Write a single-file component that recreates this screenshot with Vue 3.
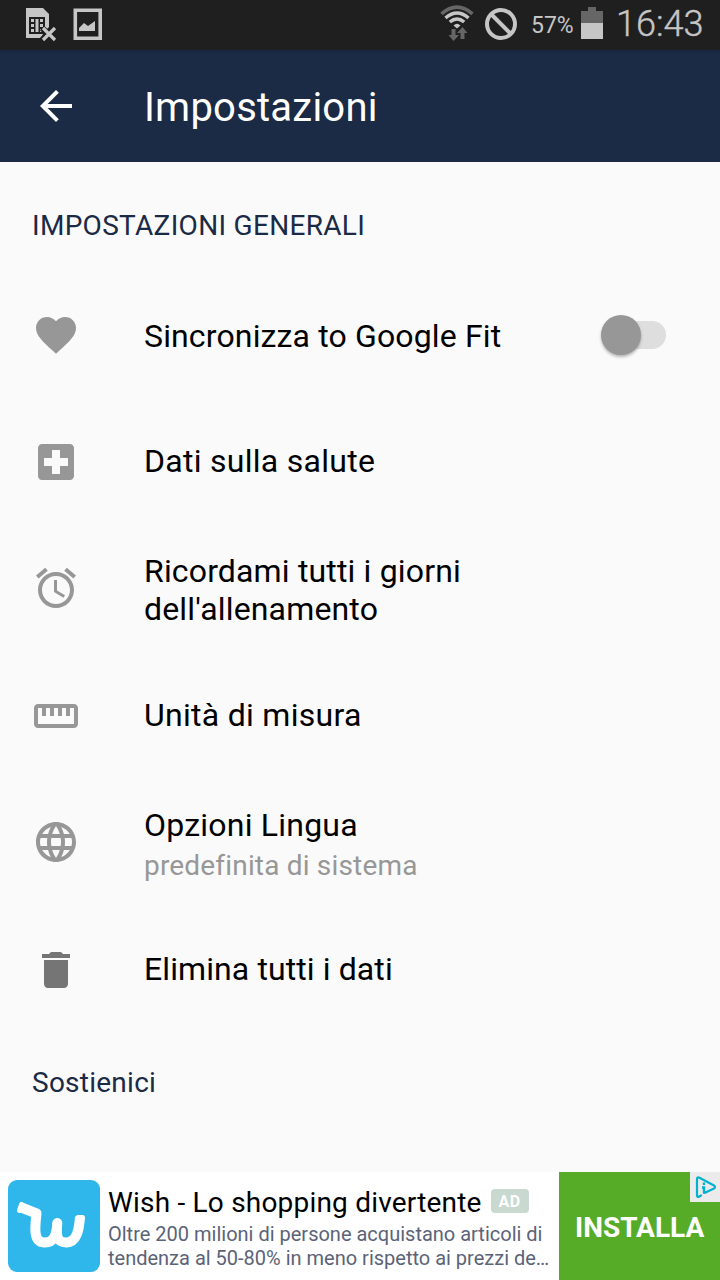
<script setup>
const rows = [
  { id: 'fit', title: ['Sincronizza to Google Fit'], toggle: true, path: 'M12 21.35l-1.45-1.32C5.4 15.36 2 12.28 2 8.5 2 5.42 4.42 3 7.5 3c1.74 0 3.41.81 4.5 2.09C13.09 3.81 14.76 3 16.5 3 19.58 3 22 5.42 22 8.5c0 3.78-3.4 6.86-8.55 11.54L12 21.35z' },
  { id: 'health', title: ['Dati sulla salute'], path: 'M19 3H5c-1.1 0-1.99.9-1.99 2L3 19c0 1.1.9 2 2 2h14c1.1 0 2-.9 2-2V5c0-1.1-.9-2-2-2zm-1 11h-4v4h-4v-4H6v-4h4V6h4v4h4v4z' },
  { id: 'alarm', title: ['Ricordami tutti i giorni', "dell'allenamento"], path: 'M22 5.72l-4.6-3.86-1.29 1.53 4.6 3.86L22 5.72zM7.88 3.39L6.6 1.86 2 5.71l1.29 1.53 4.59-3.85zM12.5 8H11v6l4.75 2.85.75-1.23-4-2.37V8zM12 4c-4.97 0-9 4.03-9 9s4.02 9 9 9c4.97 0 9-4.03 9-9s-4.03-9-9-9zm0 16c-3.87 0-7-3.13-7-7s3.13-7 7-7 7 3.13 7 7-3.13 7-7 7z' },
  { id: 'units', title: ['Unità di misura'], path: 'M21 6H3c-1.1 0-2 .9-2 2v8c0 1.1.9 2 2 2h18c1.1 0 2-.9 2-2V8c0-1.1-.9-2-2-2zm0 10H3V8h2v4h2V8h2v4h2V8h2v4h2V8h2v4h2V8h2v8z' },
  { id: 'language', title: ['Opzioni Lingua'], sub: 'predefinita di sistema', path: 'M11.99 2C6.47 2 2 6.48 2 12s4.47 10 9.99 10C17.52 22 22 17.52 22 12S17.52 2 11.99 2zm6.93 6h-2.95c-.32-1.25-.78-2.45-1.38-3.56 1.84.63 3.37 1.91 4.33 3.56zM12 4.04c.83 1.2 1.48 2.53 1.91 3.96h-3.82c.43-1.43 1.08-2.76 1.91-3.96zM4.26 14C4.1 13.36 4 12.69 4 12s.1-1.36.26-2h3.38c-.08.66-.14 1.32-.14 2 0 .68.06 1.34.14 2H4.26zm.82 2h2.95c.32 1.25.78 2.45 1.38 3.56-1.84-.63-3.37-1.9-4.33-3.56zm2.95-8H5.08c.96-1.66 2.49-2.93 4.33-3.56C8.81 5.55 8.35 6.75 8.03 8zM12 19.96c-.83-1.2-1.48-2.53-1.91-3.96h3.82c-.43 1.43-1.08 2.76-1.91 3.96zM14.34 14H9.66c-.09-.66-.16-1.32-.16-2 0-.68.07-1.35.16-2h4.68c.09.65.16 1.32.16 2 0 .68-.07 1.34-.16 2zm.25 5.56c.6-1.11 1.06-2.31 1.38-3.56h2.95c-.96 1.65-2.49 2.93-4.33 3.56zM16.36 14c.08-.66.14-1.32.14-2 0-.68-.06-1.34-.14-2h3.38c.16.64.26 1.31.26 2s-.1 1.36-.26 2h-3.38z' },
  { id: 'delete', title: ['Elimina tutti i dati'], path: 'M6 19c0 1.1.9 2 2 2h8c1.1 0 2-.9 2-2V7H6v12zM19 4h-3.500l-1-1h-5l-1 1H5v2h14V4z' },
]
</script>

<template>
  <div class="screen">
    <header class="status">
      <svg class="sim" width="32" height="34" viewBox="0 0 32 34">
        <path fill="#c6c6c6" d="M1 0h17l6 6v13l-5 5-3 6H1z" />
        <path fill="#1f1f1f" d="M4 9h16v17H4z" />
        <path fill="#c6c6c6" d="M6 11h3v3H6zM6 16h3v3H6zM6 21h3v3H6zM10.500 11h3v13h-3zM15 11h3v3h-3zM15 16h3v3h-3zM15 21h3v3h-3z" />
        <path stroke="#1f1f1f" stroke-width="6" d="M17 20l13 12M30 20L17 32" />
        <path stroke="#c6c6c6" stroke-width="3.200" d="M18 20l12 12M30 20l-12 12" />
      </svg>
      <svg class="picture" width="30" height="33" viewBox="0 0 30 33">
        <path fill="none" stroke="#c6c6c6" stroke-width="3.600" d="M2.300 2.300h24.900v27.900H2.300z" />
        <path fill="#c6c6c6" d="M6 23v-3l5-5 4 3 7-5v10z" />
      </svg>
      <span class="spacer"></span>
      <svg class="wifi" width="34" height="37" viewBox="0 0 34 37" fill="none">
        <path stroke="#666" stroke-width="3.600" d="M1.500 8.800Q17 -4.500 32.500 8.800" />
        <g stroke="#c6c6c6" stroke-width="3.500">
          <path d="M5.500 13Q17 3 28.500 13M9.800 17Q17 11 24.200 17" />
        </g>
        <path fill="#c6c6c6" d="M13.500 20.500Q17 17 20.500 20.500L17 23.500z" />
        <path fill="#666" d="M11.500 24h4v6h3.500l-5.500 6-5-6h3zM20.500 34v-6H17l5.500-6 5 6H24.500v6z" />
      </svg>
      <svg class="block" width="34" height="34" viewBox="0 0 34 34" fill="none" stroke="#c6c6c6" stroke-width="4">
        <circle cx="17" cy="17" r="14" /><path d="M7 7l20 20" />
      </svg>
      <span class="percent">57%</span>
      <svg class="battery" width="22" height="32" viewBox="0 0 22 32">
        <path fill="#666" d="M7 0h8v4h7v12H0V4h7z" /><path fill="#c6c6c6" d="M0 16h22v16H0z" />
      </svg>
      <span class="clock">16:43</span>
    </header>

    <nav class="toolbar">
      <svg width="48" height="48" viewBox="0 0 24 24"><path fill="#fff" d="M20 11H7.830l5.590-5.590L12 4l-8 8 8 8 1.410-1.410L7.830 13H20v-2z" /></svg>
      <h1>Impostazioni</h1>
    </nav>

    <main>
      <h2 class="section">IMPOSTAZIONI GENERALI</h2>
      <div v-for="row in rows" :key="row.id" class="row" :class="row.id">
        <svg class="icon" width="48" height="48" viewBox="0 0 24 24"><path :d="row.path" /></svg>
        <div class="label">
          <div v-for="(line, i) in row.title" :key="i">{{ line }}</div>
          <div v-if="row.sub" class="sub">{{ row.sub }}</div>
        </div>
        <div v-if="row.toggle" class="switch"><div class="thumb"></div></div>
      </div>
      <h2 class="support">Sostienici</h2>
    </main>

    <footer class="ad">
      <svg class="logo" width="92" height="92" viewBox="0 0 92 92">
        <rect width="92" height="92" rx="9" fill="#2fb7ec" />
        <path fill="none" stroke="#fff" stroke-width="10" stroke-linejoin="round" d="M11 26.500L28.500 33.500C27 47 25 62 36 62.500C46 63 48.500 55 49.300 43C48 56 49 62.500 58 62.500C69 62 71 50 72 37" />
        <path fill="none" stroke="#fff" stroke-width="5" stroke-linecap="round" stroke-linejoin="round" d="M13.500 24.500L11.500 30.500M47 43h4.500M70 37.500h4.500" />
      </svg>
      <div class="copy">
        <div class="adtitle"><span>Wish - Lo shopping divertente</span><span class="badge">AD</span></div>
        <div class="desc">Oltre 200 milioni di persone acquistano articoli di</div>
        <div class="desc">tendenza al 50-80% in meno rispetto ai prezzi de…</div>
      </div>
      <div class="install">
        <span>INSTALLA</span>
        <svg class="choices" width="30" height="30" viewBox="0 0 30 30">
          <path fill="#ebebeb" d="M0 0h30v30H0z" />
          <path fill="none" stroke="#00b2d0" stroke-width="2.200" stroke-linecap="round" stroke-linejoin="round" d="M11 23.500L8.500 25Q7 25 7 23V7Q7 4.500 9.500 5.800L24 13.500Q26 15 24 16.500L15.500 20.500" />
          <path stroke="#00b2d0" stroke-width="2.400" d="M14 10.500v2.400M12 15.500h2v5h2" fill="none" />
        </svg>
      </div>
    </footer>
  </div>
</template>

<style>
body { background: #fafafa; overflow: hidden; }
</style>

<style scoped>
* { box-sizing: border-box; }
.screen { width: 720px; height: 1280px; display: flex; flex-direction: column; background: #fafafa; font-family: Roboto, "Liberation Sans", sans-serif; color: #000; white-space: nowrap; overflow: hidden; }
svg { display: block; flex: none; }
h1, h2 { margin: 0; font-weight: 400; }
.status { flex: none; height: 50px; display: flex; align-items: flex-start; background: #1f1f1f; color: #c6c6c6; }
.sim { margin: 8px 0 0 25px; }
.picture { margin: 8px 0 0 16px; }
.spacer { flex: 1; }
.wifi { margin: 5px 10px 0 0; }
.block { margin: 7px 13px 0 0; }
.percent { width: 50px; font-size: 23px; line-height: 51px; }
.battery { margin-top: 7px; }
.clock { width: 88px; margin: 0 16px 0 13px; font-size: 36px; line-height: 48px; font-weight: 300; -webkit-text-stroke: 0.4px #c6c6c6; }
.toolbar { flex: none; height: 112px; background: linear-gradient(#182641, #1b2a45 5px); display: flex; align-items: center; padding-left: 32px; color: #fff; }
.toolbar h1 { margin: 3px 0 0 64px; font-size: 40px; line-height: 48px; letter-spacing: 0.23px; }
main { flex: 1; }
.section { height: 109px; padding: 46px 0 0 32px; font-size: 28px; line-height: 36px; letter-spacing: 0.3px; color: #1b2a45; }
.row { height: 127px; display: flex; align-items: center; padding: 0 54px 0 32px; }
.icon { fill: #979797; }
.alarm .icon, .language .icon { margin-top: -2px; }
.delete .icon { fill: #757575; }
.label { flex: 1; margin-left: 64px; padding-bottom: 2px; font-size: 32px; line-height: 38px; letter-spacing: 0.22px; }
.fit .label { padding: 2px 0 0; letter-spacing: 0.14px; }
.alarm .label { padding: 3px 0 0; letter-spacing: 0.16px; }
.health .label, .units .label { letter-spacing: 0.28px; }
.language .label { padding: 8px 0 0; }
.delete .label { letter-spacing: 0.1px; }
.sub { font-size: 28px; line-height: 44px; margin-bottom: -2px; letter-spacing: 0.18px; color: #979797; }
.language .label { padding-top: 6px; }
.switch { width: 64px; height: 28px; border-radius: 14px; background: #dedede; }
.thumb { width: 40px; height: 40px; margin: -6px 0 0 -1px; border-radius: 50%; background: #979797; box-shadow: 0 2px 3px rgba(0, 0, 0, 0.28); }
.support { padding: 32px 0 0 32px; font-size: 28px; line-height: 36px; letter-spacing: 0.25px; color: #1b2a45; }
.ad { flex: none; height: 108px; background: #fff; display: flex; }
.logo { margin: 8px; }
.copy { flex: 1; padding-top: 10px; }
.adtitle { display: flex; align-items: center; height: 40px; font-size: 28px; letter-spacing: 0.2px; }
.badge { width: 38px; height: 24px; margin: 0 0 2px 9px; border-radius: 4px; background: #c9d9cf; color: #fff; font-size: 16px; line-height: 25px; font-weight: 700; letter-spacing: 0.5px; text-align: center; }
.desc { font-size: 20px; line-height: 24px; color: #5b6377; }
.install { position: relative; width: 161px; background: #56ab27; color: #fff; font-size: 28px; font-weight: 700; line-height: 111px; padding-left: 16px; }
.choices { position: absolute; right: 0; top: 0; }
</style>
